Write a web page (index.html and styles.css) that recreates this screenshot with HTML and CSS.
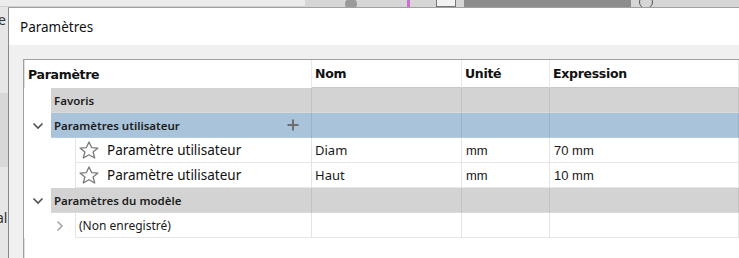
FILE: index.html
```html
<!DOCTYPE html>
<html lang="fr">
<head>
    <meta charset="UTF-8">
    <title>Paramètres</title>
    <link rel="stylesheet" href="styles.css">
</head>
<body>
    <div class="screen">
        <div class="backdrop-top">
            <div class="strip-light"></div>
            <div class="strip-dot"></div>
            <div class="strip-pink"></div>
            <div class="strip-doc">
                <span class="doc-icon"></span>
                <span class="doc-bar"></span>
                <span class="strip-circle"></span>
            </div>
        </div>
        <div class="backdrop-left">
            <span class="edge-text top">e</span>
            <span class="edge-band"></span>
            <span class="edge-text bottom">al</span>
        </div>

        <div class="dialog">
            <div class="dialog-title">Paramètres</div>
            <div class="dialog-body">
                <div class="table">
                    <div class="row header">
                        <div class="cell first">Paramètre</div>
                        <div class="cell">Nom</div>
                        <div class="cell">Unité</div>
                        <div class="cell">Expression</div>
                    </div>

                    <div class="row group">
                        <div class="cell first"><span class="twisty"></span><span class="label">Favoris</span></div>
                        <div class="cell"></div>
                        <div class="cell"></div>
                        <div class="cell"></div>
                    </div>

                    <div class="row group selected">
                        <div class="cell first">
                            <span class="twisty">
                                <svg width="12" height="8" viewBox="0 0 12 8"><path d="M1.5 1.5 L6 6 L10.5 1.5" fill="none" stroke="#505050" stroke-width="1.6"/></svg>
                            </span>
                            <span class="label">Paramètres utilisateur</span>
                            <svg class="plus" width="12" height="12" viewBox="0 0 12 12"><path d="M6 0.5 V11.5 M0.5 6 H11.5" stroke="#6e6e6e" stroke-width="2"/></svg>
                        </div>
                        <div class="cell"></div>
                        <div class="cell"></div>
                        <div class="cell"></div>
                    </div>

                    <div class="row item">
                        <div class="cell first">
                            <span class="indent"></span>
                            <span class="item-body">
                                <svg class="star" width="22" height="18" viewBox="0 0 22 18"><path d="M11 1 L13.6 6.6 L20 7.1 L15.1 11 L16.7 17 L11 13.8 L5.3 17 L6.9 11 L2 7.1 L8.4 6.6 Z" fill="none" stroke="#7a7a7a" stroke-width="1.3" stroke-linejoin="round"/></svg>
                                <span class="item-label">Paramètre utilisateur</span>
                            </span>
                        </div>
                        <div class="cell name">Diam</div>
                        <div class="cell value">mm</div>
                        <div class="cell value">70 mm</div>
                    </div>

                    <div class="row item">
                        <div class="cell first">
                            <span class="indent"></span>
                            <span class="item-body">
                                <svg class="star" width="22" height="18" viewBox="0 0 22 18"><path d="M11 1 L13.6 6.6 L20 7.1 L15.1 11 L16.7 17 L11 13.8 L5.3 17 L6.9 11 L2 7.1 L8.4 6.6 Z" fill="none" stroke="#7a7a7a" stroke-width="1.3" stroke-linejoin="round"/></svg>
                                <span class="item-label">Paramètre utilisateur</span>
                            </span>
                        </div>
                        <div class="cell name">Haut</div>
                        <div class="cell value">mm</div>
                        <div class="cell value">10 mm</div>
                    </div>

                    <div class="row group">
                        <div class="cell first">
                            <span class="twisty">
                                <svg width="12" height="8" viewBox="0 0 12 8"><path d="M1.5 1.5 L6 6 L10.5 1.5" fill="none" stroke="#505050" stroke-width="1.6"/></svg>
                            </span>
                            <span class="label">Paramètres du modèle</span>
                        </div>
                        <div class="cell"></div>
                        <div class="cell"></div>
                        <div class="cell"></div>
                    </div>

                    <div class="row item">
                        <div class="cell first">
                            <span class="indent sub">
                                <svg width="8" height="12" viewBox="0 0 8 12"><path d="M1.5 1.5 L6 6 L1.5 10.5" fill="none" stroke="#a8a8a8" stroke-width="1.6"/></svg>
                            </span>
                            <span class="item-body"><span class="small-label">(Non enregistré)</span></span>
                        </div>
                        <div class="cell"></div>
                        <div class="cell"></div>
                        <div class="cell"></div>
                    </div>
                </div>
            </div>
        </div>
    </div>
</body>
</html>
```

FILE: styles.css
```css
body {
    margin: 0;
    font-family: 'Noto Sans', sans-serif;
    color: #1a1a1a;
    background: #e4e4e4;
    overflow: hidden;
}

.screen {
    display: grid;
    grid-template-columns: 8px 1fr;
    grid-template-rows: 7px 251px;
    width: 739px;
    height: 258px;
}

/* application behind the dialog */
.backdrop-top {
    grid-column: 1 / 3;
    display: flex;
    align-items: stretch;
    background: #d6d6d6;
    overflow: hidden;
}

.strip-light {
    width: 305px;
    background: #ececec;
    border-bottom: 1px solid #d0d0d0;
}

.strip-dot {
    width: 12px;
    height: 12px;
    margin: -2px 0 0 40px;
    border-radius: 50%;
    background: #9a9a9a;
}

.strip-pink {
    width: 3px;
    margin-left: 50px;
    background: #d36ad6;
}

.strip-doc {
    display: flex;
    align-items: stretch;
    margin-left: 26px;
}

.doc-icon {
    width: 18px;
    border: 1px solid #777;
    border-top: none;
    background: #f2f2f2;
}

.doc-bar {
    width: 167px;
    margin-left: 8px;
    background: #8c8c8c;
}

.strip-circle {
    width: 12px;
    height: 12px;
    margin: -5px 0 0 8px;
    border: 1.5px solid #555;
    border-radius: 50%;
}

.backdrop-left {
    position: relative;
    background: #e6e6e6;
    overflow: hidden;
}

.edge-band {
    position: absolute;
    left: 0;
    top: 86px;
    width: 8px;
    height: 74px;
    background: #d8d8d8;
}

.edge-text {
    position: absolute;
    left: -2px;
    font-size: 14px;
    color: #333;
}

.edge-text.top { top: 3px; }
.edge-text.bottom { top: 201px; left: -4px; }

/* dialog */
.dialog {
    display: flex;
    flex-direction: column;
    border-left: 1px solid #8a8a8a;
    border-top: 1px solid #a0a0a0;
    background: #fff;
    min-width: 0;
}

.dialog-title {
    height: 37px;
    padding-left: 11px;
    font-size: 13.5px;
    line-height: 38px;
    color: #111;
    background: #fff;
}

.dialog-body {
    flex: 1;
    background: #f0f0f0;
    padding: 14px 0 0 14px;
}

.table {
    height: 100%;
    background: #fff;
    border-left: 1px solid #a0a0a0;
    border-top: 1px solid #a0a0a0;
    box-shadow: inset 1px 0 0 #e0e0e0;
}

.row {
    display: grid;
    grid-template-columns: 288px 150px 88px 1fr;
    height: 25px;
}

.cell {
    display: flex;
    align-items: center;
    border-right: 1px solid #e4e4e4;
    border-bottom: 1px solid #e6e6e6;
    padding-left: 3px;
    font-size: 13px;
    min-width: 0;
    white-space: nowrap;
}

.row.header {
    height: 28px;
}

.row.header .cell {
    font-family: 'DejaVu Sans', sans-serif;
    font-weight: bold;
    font-size: 12.5px;
    letter-spacing: -0.3px;
    color: #111;
    border-bottom: 1px solid #c8c8c8;
    border-right-color: #e8e8e8;
}

.row.header .cell.first {
    padding-left: 4px;
    border-bottom: none;
}

.cell.first {
    padding-left: 0;
    border-bottom: none;
}

/* groups */
.twisty {
    display: flex;
    align-items: center;
    justify-content: center;
    width: 26px;
    height: 100%;
    padding-left: 1px;
    background: #fff;
    flex-shrink: 0;
}

.row.group .cell {
    background: #d3d3d3;
    border-right-color: #c2c2c2;
    border-bottom: 1px solid #dadada;
}

.row.group .cell.first {
    background: #fff;
    border-bottom: none;
}

.row.group .label {
    display: flex;
    align-items: center;
    flex: 1;
    align-self: stretch;
    padding-left: 3px;
    background: #d3d3d3;
    border-bottom: 1px solid #dadada;
    font-size: 11.5px;
    font-weight: 600;
    color: #1c1c1c;
}

.row.selected .cell {
    background: #a9c3da;
    border-right-color: #9bb3c9;
    border-bottom-color: #b4cbe0;
}

.row.selected .cell.first {
    position: relative;
    background: #fff;
}

.row.selected .label {
    background: #a9c3da;
    border-bottom-color: #b4cbe0;
}

.plus {
    position: absolute;
    right: 12px;
    top: 6px;
}

/* items */
.indent {
    display: flex;
    align-items: center;
    justify-content: flex-end;
    width: 51px;
    height: 100%;
    flex-shrink: 0;
    background: #fff;
}

.indent.sub {
    padding-right: 11px;
    box-sizing: border-box;
}

.item-body {
    display: flex;
    align-items: center;
    flex: 1;
    align-self: stretch;
    border-left: 1px solid #e4e4e4;
    border-bottom: 1px solid #e6e6e6;
    padding-left: 2px;
}

.star {
    margin-right: 7px;
}

.item-label {
    font-size: 13.5px;
    color: #111;
}

.small-label {
    font-size: 12px;
    color: #1a1a1a;
    padding-left: 1px;
}

.cell.name {
    font-size: 13px;
    padding-left: 3px;
}

.cell.value {
    font-family: 'Liberation Sans', sans-serif;
    font-size: 13px;
    padding-left: 4px;
}
```
